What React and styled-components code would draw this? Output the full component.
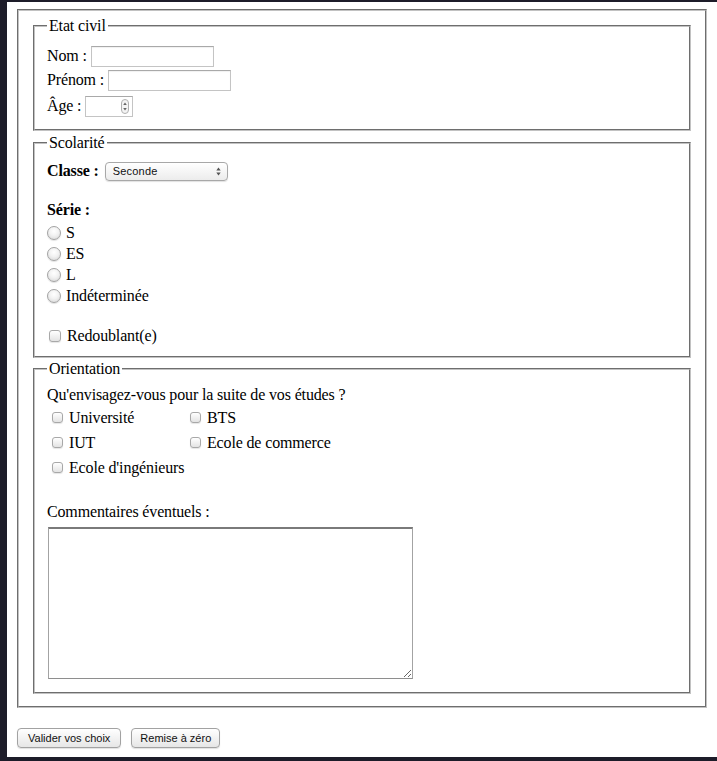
import React from "react";
import styled, { createGlobalStyle } from "styled-components";

const Global = createGlobalStyle`
  html, body { margin: 0; padding: 0; background: #1d1c29; }
  body { font-family: "Liberation Serif", "Times New Roman", serif; font-size: 16px; line-height: 18px; color: #000; letter-spacing: -0.15px; }
  * { box-sizing: border-box; }
`;

const Page = styled.div`
  margin: 2px 0 0 7px;
  height: 755px;
  background: #fff;
  padding: 7px 8px 0;
`;

const Outer = styled.fieldset`
  margin: 0 2px;
  border: 2px groove #c2c2c2;
  padding: 6px 12px 12px;
  min-width: 0;
`;

const Section = styled.fieldset`
  margin: ${(p) => p.$mt || 0}px 2px 0;
  border: 2px groove #c2c2c2;
  padding: ${(p) => p.$pt}px 12px ${(p) => p.$pb}px;
  min-width: 0;
`;

const Legend = styled.legend`
  padding: 0 2px;
  font-size: 16px;
  line-height: 18px;
`;

const Row = styled.div`
  display: flex;
  align-items: center;
  height: ${(p) => p.$h || 24}px;
  gap: ${(p) => p.$gap || 4}px;
  margin-top: ${(p) => p.$mt || 0}px;
`;

const Line = styled.div`
  height: 18px;
  margin-top: ${(p) => p.$mt || 0}px;
  font-weight: ${(p) => (p.$bold ? 700 : 400)};
`;

const Bold = styled.span`
  font-weight: 700;
`;

const TextInput = styled.input`
  width: ${(p) => p.$w}px;
  height: 21px;
  border: 1px solid #c4c4c4;
  border-top-color: #a9a9a9;
  box-shadow: inset 0 1px 1px rgba(0, 0, 0, 0.06);
  padding: 1px 3px;
  font: 13px "Liberation Sans", sans-serif;
  margin: 0;
  outline: none;
`;

const NumberBox = styled.span`
  display: inline-flex;
  align-items: center;
  width: 48px;
  height: 21px;
  border: 1px solid #c4c4c4;
  border-top-color: #a9a9a9;
  background: #fff;
  padding-right: 3px;
`;

const NumberField = styled.input`
  flex: 1;
  min-width: 0;
  height: 100%;
  border: none;
  padding: 0 3px;
  font: 13px "Liberation Sans", sans-serif;
  outline: none;
  background: transparent;
  -moz-appearance: textfield;
  &::-webkit-inner-spin-button, &::-webkit-outer-spin-button { -webkit-appearance: none; margin: 0; }
`;

const SelectWrap = styled.span`
  position: relative;
  display: inline-flex;
`;

const Select = styled.select`
  appearance: none;
  -webkit-appearance: none;
  width: 123px;
  height: 19px;
  border: 1px solid #a8a8a8;
  border-radius: 4px;
  background: linear-gradient(#ffffff, #ececec);
  box-shadow: 0 1px 1px rgba(0, 0, 0, 0.12);
  font: 11px "Liberation Sans", sans-serif;
  letter-spacing: 0.2px;
  color: #111;
  padding: 0 18px 0 7px;
  margin: 0;
  outline: none;
`;

const SelectArrows = styled.svg`
  position: absolute;
  right: 7px;
  top: 5px;
  pointer-events: none;
`;

const Radio = styled.input.attrs({ type: "radio" })`
  appearance: none;
  -webkit-appearance: none;
  width: 14px;
  height: 14px;
  margin: 0;
  border-radius: 50%;
  border: 1px solid #a3a3a3;
  background: radial-gradient(circle at 50% 35%, #ffffff 0%, #f2f2f2 45%, #d4d4d4 100%);
  box-shadow: 0 1px 1px rgba(0, 0, 0, 0.12);
  flex: none;
`;

const Check = styled.input.attrs({ type: "checkbox" })`
  appearance: none;
  -webkit-appearance: none;
  width: ${(p) => p.$s || 11}px;
  height: ${(p) => p.$s || 11}px;
  margin: 0 0 0 ${(p) => p.$ml || 0}px;
  border-radius: 3px;
  border: 1px solid #a8a8a8;
  background: linear-gradient(#ffffff, #e3e3e3);
  box-shadow: 0 1px 1px rgba(0, 0, 0, 0.1);
  flex: none;
`;

const Grid = styled.div`
  display: grid;
  grid-template-columns: 138px auto;
  grid-auto-rows: 25px;
  padding-left: 5px;
  margin-top: 1px;
`;

const Cell = styled.label`
  display: flex;
  align-items: center;
  gap: 6px;
`;

const Area = styled.textarea`
  display: block;
  width: 365px;
  height: 152px;
  margin: 6px 0 0 1px;
  border-style: solid;
  border-width: 2px 1px 1px 1px;
  border-color: #7a7a7a #a3a3a3 #8e8e8e #a3a3a3;
  resize: both;
  font: 13px "Liberation Mono", monospace;
  outline: none;
`;

const Buttons = styled.div`
  display: flex;
  gap: 10px;
  margin: 20px 0 0 2px;
`;

const Button = styled.button`
  height: 20px;
  padding: 0 ${(p) => p.$px || 10}px;
  border: 1px solid #a2a2a2;
  border-radius: 4px;
  background: linear-gradient(#ffffff, #e6e6e6);
  box-shadow: 0 1px 1px rgba(0, 0, 0, 0.12);
  font: 11px "Liberation Sans", sans-serif;
  letter-spacing: 0;
  color: #111;
  margin: 0;
`;

function Spinner() {
  return (
    <svg width="8" height="15" viewBox="0 0 8 15">
      <rect x="0.5" y="0.5" width="7" height="14" rx="3.5" fill="#f4f4f4" stroke="#b0b0b0" />
      <path d="M2.2 6 L4 3.4 L5.8 6 Z" fill="#666" />
      <path d="M2.2 9 L4 11.6 L5.8 9 Z" fill="#666" />
    </svg>
  );
}

export default function App() {
  return (
    <>
      <Global />
      <Page>
        <form onSubmit={(e) => e.preventDefault()}>
          <Outer>
            <Section $pt={9} $pb={9}>
              <Legend>Etat civil</Legend>
              <Row>
                <label htmlFor="nom">Nom :</label>
                <TextInput id="nom" $w={123} />
              </Row>
              <Row>
                <label htmlFor="prenom">Prénom :</label>
                <TextInput id="prenom" $w={123} />
              </Row>
              <Row $h={28}>
                <label htmlFor="age">Âge :</label>
                <NumberBox>
                  <NumberField id="age" type="number" />
                  <Spinner />
                </NumberBox>
              </Row>
            </Section>

            <Section $mt={3} $pt={7} $pb={10}>
              <Legend>Scolarité</Legend>
              <Row $gap={6}>
                <Bold>Classe :</Bold>
                <SelectWrap>
                  <Select defaultValue="Seconde">
                    <option>Seconde</option>
                    <option>Première</option>
                    <option>Terminale</option>
                  </Select>
                  <SelectArrows width="5" height="9" viewBox="0 0 5 9">
                    <path d="M0.3 3.4 L2.5 0.6 L4.7 3.4 Z" fill="#555" />
                    <path d="M0.3 5.6 L2.5 8.4 L4.7 5.6 Z" fill="#555" />
                  </SelectArrows>
                </SelectWrap>
              </Row>
              <Line $mt={18} $bold>Série :</Line>
              <Row $h={21} $gap={5} $mt={3}>
                <Radio name="serie" />
                <span>S</span>
              </Row>
              <Row $h={21} $gap={5}>
                <Radio name="serie" />
                <span>ES</span>
              </Row>
              <Row $h={21} $gap={5}>
                <Radio name="serie" />
                <span>L</span>
              </Row>
              <Row $h={21} $gap={5}>
                <Radio name="serie" />
                <span>Indéterminée</span>
              </Row>
              <Row $h={21} $gap={6} $mt={19}>
                <Check $s={12} $ml={2} />
                <span>Redoublant(e)</span>
              </Row>
            </Section>

            <Section $mt={2} $pt={8} $pb={13}>
              <Legend>Orientation</Legend>
              <Line>Qu'envisagez-vous pour la suite de vos études ?</Line>
              <Grid>
                <Cell><Check />Université</Cell>
                <Cell><Check />BTS</Cell>
                <Cell><Check />IUT</Cell>
                <Cell><Check />Ecole de commerce</Cell>
                <Cell><Check />Ecole d'ingénieurs</Cell>
              </Grid>
              <Line $mt={23}>Commentaires éventuels :</Line>
              <Area />
            </Section>
          </Outer>
          <Buttons>
            <Button type="submit" $px={10}>Valider vos choix</Button>
            <Button type="reset" $px={8}>Remise à zéro</Button>
          </Buttons>
        </form>
      </Page>
    </>
  );
}
